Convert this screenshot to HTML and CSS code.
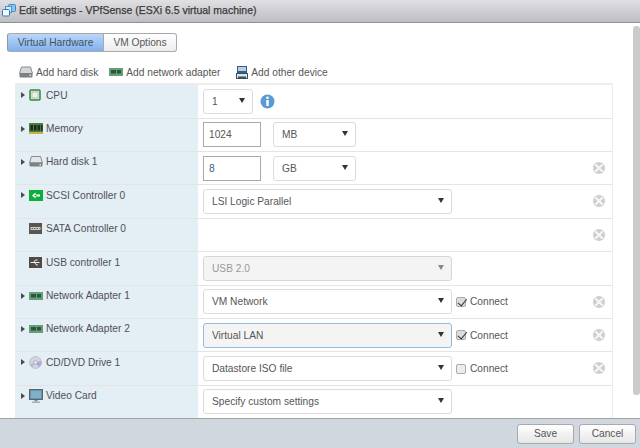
FILE: index.html
```html
<!DOCTYPE html>
<html lang="en">
<head>
<meta charset="utf-8">
<title>Edit settings</title>
<link rel="stylesheet" href="styles.css">
</head>
<body>
<div class="dialog">
  <header class="titlebar">
    <svg class="title-icon" width="14" height="14" viewBox="0 0 14 14"><rect x="6.500" y="1.500" width="7" height="7" rx="1" fill="#8cc4ee" stroke="#3f88c5"/><rect x="3.500" y="3.500" width="6" height="6" fill="#d4ebfa" stroke="#4d93c9"/><rect x=".5" y="6.500" width="7" height="6.500" rx="1" fill="#f4fafe" stroke="#2f7cbc"/></svg>
    <span>Edit settings - VPfSense (ESXi 6.5 virtual machine)</span>
  </header>
  <main class="content">
    <div class="tabs">
      <div class="tab active">Virtual Hardware</div>
      <div class="tab">VM Options</div>
    </div>
    <div class="toolbar">
      <div class="tool">
        <svg width="14" height="12" viewBox="0 0 14 12"><path d="M2.500 1h9l2 6.500H.5z" fill="#d3d7da" stroke="#868c92"/><rect x=".5" y="7" width="13" height="4.500" rx="1" fill="#7a8288"/><rect x="10.500" y="8.500" width="1.500" height="1.500" fill="#dfe5e8"/></svg>
        <span>Add hard disk</span>
      </div>
      <div class="tool">
        <svg width="14" height="8" viewBox="0 0 14 8"><rect width="14" height="8" fill="#62a177"/><rect x="2" y="2" width="5" height="3.500" fill="#33533c"/><rect x="8" y="2" width="4" height="3.500" fill="#33533c"/></svg>
        <span>Add network adapter</span>
      </div>
      <div class="tool">
        <svg width="12" height="13" viewBox="0 0 12 13"><rect x="1.500" y=".5" width="9" height="6" fill="#b9cfe0" stroke="#2f5f8c"/><rect x="1.500" y="5" width="9" height="2" fill="#2f5f8c"/><rect x=".5" y="7.500" width="11" height="5" fill="#dde4e8" stroke="#3b4f5e"/><rect x="2" y="10.500" width="8" height="1.500" fill="#3b4f5e"/></svg>
        <span>Add other device</span>
      </div>
    </div>
    <div class="hw-table">

      <div class="row">
        <div class="label"><div class="line">
          <i class="caret"></i>
          <span class="icon-box"><svg width="12" height="12" viewBox="0 0 12 12"><rect x="1" y="1" width="10" height="10" rx="1" fill="#e4ebe2" stroke="#2f8a3c" stroke-width="1.500"/><rect x="3" y="3" width="6" height="6" fill="#eef0ea" stroke="#94a894" stroke-width=".6"/></svg></span>
          <span>CPU</span>
        </div></div>
        <div class="value">
          <div class="select w-cpu"><span>1</span><i class="arrow"></i></div>
          <svg class="info" width="15" height="15" viewBox="0 0 15 15"><circle cx="7.500" cy="7.500" r="7" fill="#5b9bd5"/><circle cx="7.500" cy="3.800" r="1.300" fill="#fff"/><rect x="6.300" y="6" width="2.400" height="6" fill="#fff"/></svg>
        </div>
      </div>

      <div class="row">
        <div class="label"><div class="line">
          <i class="caret"></i>
          <span class="icon-box"><svg width="14" height="11" viewBox="0 0 14 11"><rect width="14" height="9" fill="#4a7d42"/><rect x="1.500" y="2" width="2.500" height="5.500" fill="#1d2a1d"/><rect x="5" y="2" width="2.500" height="5.500" fill="#1d2a1d"/><rect x="8.500" y="2" width="2.500" height="5.500" fill="#1d2a1d"/><rect x="12" y="2" width="1.500" height="5.500" fill="#1d2a1d"/><rect y="9" width="14" height="2" fill="#c8b53f"/></svg></span>
          <span>Memory</span>
        </div></div>
        <div class="value">
          <div class="input">1024</div>
          <div class="select w-unit"><span>MB</span><i class="arrow"></i></div>
        </div>
      </div>

      <div class="row">
        <div class="label"><div class="line">
          <i class="caret"></i>
          <span class="icon-box"><svg width="14" height="11" viewBox="0 0 14 11"><path d="M2.500.5h9l2 6.500H.5z" fill="#e3e6e8" stroke="#868c92"/><rect x=".5" y="6.500" width="13" height="4" rx="1" fill="#7a8288"/><rect x="10.500" y="8" width="1.500" height="1.500" fill="#dfe5e8"/></svg></span>
          <span>Hard disk 1</span>
        </div></div>
        <div class="value">
          <div class="input blue">8</div>
          <div class="select w-unit"><span>GB</span><i class="arrow"></i></div>
          <i class="remove"></i>
        </div>
      </div>

      <div class="row">
        <div class="label"><div class="line">
          <i class="caret"></i>
          <span class="icon-box"><svg width="14" height="11" viewBox="0 0 14 11"><rect width="14" height="11" fill="#0cae3a"/><path d="M3 5.500 6.500 2.500v2h4.500v2H6.500v2z" fill="#fff"/><rect x="5.500" y="5" width="2" height="1" fill="#0cae3a"/></svg></span>
          <span>SCSI Controller 0</span>
        </div></div>
        <div class="value">
          <div class="select w-wide"><span>LSI Logic Parallel</span><i class="arrow"></i></div>
          <i class="remove"></i>
        </div>
      </div>

      <div class="row">
        <div class="label no-caret"><div class="line">
          <span class="icon-box"><svg width="13" height="11" viewBox="0 0 13 11"><rect width="13" height="11" fill="#5a5550"/><rect x="1.500" y="4" width="10" height="3" fill="#cfcfcf"/><path d="M2.500 5.500h8" stroke="#5a5550" stroke-dasharray="1.500 1"/></svg></span>
          <span>SATA Controller 0</span>
        </div></div>
        <div class="value">
          <i class="remove"></i>
        </div>
      </div>

      <div class="row">
        <div class="label no-caret"><div class="line">
          <span class="icon-box"><svg width="13" height="11" viewBox="0 0 13 11"><rect width="13" height="11" fill="#4f4a46"/><path d="M1.500 5.500h9M4.500 5.500 6.500 3h2M5.500 5.500 7.500 8h1.500" stroke="#f0f0f0" fill="none"/></svg></span>
          <span>USB controller 1</span>
        </div></div>
        <div class="value">
          <div class="select w-wide disabled"><span>USB 2.0</span><i class="arrow"></i></div>
        </div>
      </div>

      <div class="row">
        <div class="label"><div class="line">
          <i class="caret"></i>
          <span class="icon-box"><svg width="14" height="8" viewBox="0 0 14 8"><rect width="14" height="8" fill="#62a177"/><rect x="2" y="2" width="5" height="3.500" fill="#33533c"/><rect x="8" y="2" width="4" height="3.500" fill="#33533c"/></svg></span>
          <span>Network Adapter 1</span>
        </div></div>
        <div class="value">
          <div class="select w-wide"><span>VM Network</span><i class="arrow"></i></div>
          <label class="connect"><i class="check on"></i><span>Connect</span></label>
          <i class="remove"></i>
        </div>
      </div>

      <div class="row">
        <div class="label"><div class="line">
          <i class="caret"></i>
          <span class="icon-box"><svg width="14" height="8" viewBox="0 0 14 8"><rect width="14" height="8" fill="#62a177"/><rect x="2" y="2" width="5" height="3.500" fill="#33533c"/><rect x="8" y="2" width="4" height="3.500" fill="#33533c"/></svg></span>
          <span>Network Adapter 2</span>
        </div></div>
        <div class="value">
          <div class="select w-wide focus"><span>Virtual LAN</span><i class="arrow"></i></div>
          <label class="connect"><i class="check on"></i><span>Connect</span></label>
          <i class="remove"></i>
        </div>
      </div>

      <div class="row">
        <div class="label"><div class="line">
          <i class="caret"></i>
          <span class="icon-box"><svg width="13" height="13" viewBox="0 0 13 13"><circle cx="6.500" cy="6.500" r="6" fill="#d3d4dc" stroke="#b0b0b8" stroke-width=".6"/><path d="M6.500 6.500 12.300 5a6 6 0 0 1-2.500 6z" fill="#bba4d8"/><path d="M6.500 6.500 1 8a6 6 0 0 0 2.500 3.300z" fill="#a8c0dc"/><circle cx="6.500" cy="6.500" r="1.600" fill="#fff" stroke="#888" stroke-width=".6"/></svg></span>
          <span>CD/DVD Drive 1</span>
        </div></div>
        <div class="value">
          <div class="select w-wide"><span>Datastore ISO file</span><i class="arrow"></i></div>
          <label class="connect"><i class="check"></i><span>Connect</span></label>
          <i class="remove"></i>
        </div>
      </div>

      <div class="row">
        <div class="label"><div class="line">
          <i class="caret"></i>
          <span class="icon-box"><svg width="14" height="14" viewBox="0 0 14 14"><rect x=".5" y=".5" width="13" height="10" fill="#6b93a8" stroke="#56656f"/><rect x="2" y="2" width="10" height="7" fill="#7fb0c8"/><rect x="5.500" y="11" width="3" height="1.500" fill="#7b8a94"/><rect x="3" y="12.500" width="8" height="1.500" fill="#a5b0b8"/></svg></span>
          <span>Video Card</span>
        </div></div>
        <div class="value">
          <div class="select w-wide"><span>Specify custom settings</span><i class="arrow"></i></div>
        </div>
      </div>

    </div>
    <div class="scrollbar"></div>
  </main>
  <footer class="footer">
    <button class="btn">Save</button>
    <button class="btn">Cancel</button>
  </footer>
</div>
</body>
</html>
```

FILE: styles.css
```css
* { box-sizing: border-box; }
html, body { margin: 0; height: 100%; }
body {
  font-family: "Liberation Sans", Arial, sans-serif;
  font-size: 10.200px;
  color: #565656;
  background: #fff;
  overflow: hidden;
}
.dialog {
  width: 640px;
  height: 448px;
  display: flex;
  flex-direction: column;
}
.titlebar {
  height: 23px;
  flex: none;
  display: flex;
  align-items: center;
  gap: 3px;
  padding: 0 0 2px 2px;
  background: linear-gradient(#dfdfe4, #bebfc2);
  border-bottom: 1px solid #8f9092;
  font-size: 10.500px;
  color: #3a3a3a;
  -webkit-text-stroke: .25px #3a3a3a;
}
.content {
  position: relative;
  flex: 1;
  min-height: 0;
  overflow: hidden;
  padding: 10px 27px 0 7px;
}
.tabs { display: flex; height: 19px; width: 170px; }
.tab {
  display: flex;
  align-items: center;
  justify-content: center;
  width: 73px;
  border: 1px solid #a9a9a9;
  border-left: 0;
  border-radius: 0 3px 3px 0;
  background: linear-gradient(#fff, #ececec);
  color: #565656;
}
.tab.active {
  width: 97px;
  border-left: 1px solid #8a9aaa;
  border-radius: 3px 0 0 3px;
  background: linear-gradient(#bcd6f7, #7fb2ee);
  color: #44505c;
}
.toolbar {
  display: flex;
  align-items: center;
  height: 18px;
  margin: 11px 0 2px;
  padding-left: 12px;
  gap: 11px;
}
.tool { display: flex; align-items: center; gap: 3px; }
.tool:nth-child(3) { margin-left: 5px; }
.hw-table {
  margin-left: 8px;
  width: 598px;
  border: 1px solid #ececec;
  border-bottom: 0;
  border-top-width: 2px;
}
.row {
  display: flex;
  height: 33.400px;
  border-bottom: 1px solid #e4e4e4;
}
.row:first-child { height: 33.600px; }
.label {
  width: 182px;
  flex: none;
  padding: 3px 0 0 5px;
  background: #e4eef5;
  color: #50505a;
}
.label.no-caret { padding-left: 13px; }
.line {
  display: flex;
  align-items: center;
  height: 14px;
}
.caret {
  flex: none;
  width: 0;
  height: 0;
  margin-right: 4px;
  border-left: 4px solid #4a4a4a;
  border-top: 3px solid transparent;
  border-bottom: 3px solid transparent;
}
.icon-box {
  flex: none;
  display: flex;
  align-items: center;
  width: 17px;
}
.value {
  position: relative;
  flex: 1;
  display: flex;
  align-items: center;
  padding: 0 0 0 5px;
}
.select {
  position: relative;
  display: flex;
  align-items: center;
  height: 25px;
  padding-left: 8px;
  border: 1px solid #dcdcdc;
  border-radius: 3px;
  background: #fff;
}
.select.focus { border-color: #8fbce6; background: #f4f4f4; }
.select.disabled { background: #f4f4f4; color: #999; border-color: #d8d8d8; }
.w-cpu { width: 50px; }
.w-unit { width: 83px; margin-left: 12px; }
.w-wide { width: 249px; }
.arrow {
  position: absolute;
  right: 7px;
  top: 8px;
  width: 0;
  height: 0;
  border-left: 3.500px solid transparent;
  border-right: 3.500px solid transparent;
  border-top: 5px solid #333;
}
.disabled .arrow { border-top-color: #888; }
.input {
  display: flex;
  align-items: center;
  width: 58px;
  height: 25px;
  padding-left: 5px;
  border: 1px solid #aaa;
  background: #fff;
}
.input.blue { color: #3b5f86; }
.info { margin-left: 7px; }
.connect { display: flex; align-items: center; gap: 4px; margin-left: 4px; }
.check {
  position: relative;
  width: 10px;
  height: 10px;
  border: 1px solid #aaa;
  border-radius: 2px;
  background: #ececec;
}
.check.on { background: #dcdcdc; }
.check.on::after {
  content: "";
  position: absolute;
  left: 2.500px;
  top: -1px;
  width: 4px;
  height: 7.500px;
  border: solid #333;
  border-width: 0 1.800px 1.800px 0;
  transform: rotate(40deg);
}
.remove {
  position: absolute;
  right: 7px;
  top: 10px;
  width: 12px;
  height: 12px;
  border-radius: 50%;
  background:
    linear-gradient(45deg, transparent 42%, #f4f4f4 42%, #f4f4f4 58%, transparent 58%) center / 8px 8px no-repeat,
    linear-gradient(-45deg, transparent 42%, #f4f4f4 42%, #f4f4f4 58%, transparent 58%) center / 8px 8px no-repeat,
    #cfcfcf;
}
.scrollbar {
  position: absolute;
  right: 0;
  top: 3px;
  width: 7px;
  height: 369px;
  border-radius: 3px;
  background: #cbcbcb;
}
.footer {
  height: 30px;
  flex: none;
  display: flex;
  justify-content: flex-end;
  align-items: center;
  gap: 5px;
  padding: 0 4px 0 0;
  background: #d1d7de;
  border-top: 1px solid #a3a3a3;
}
.btn {
  width: 57px;
  height: 20px;
  padding: 0;
  font: inherit;
  color: #565656;
  border: 1px solid #a9a9a9;
  border-radius: 3px;
  background: linear-gradient(#fff, #e6e6e6);
}
```
